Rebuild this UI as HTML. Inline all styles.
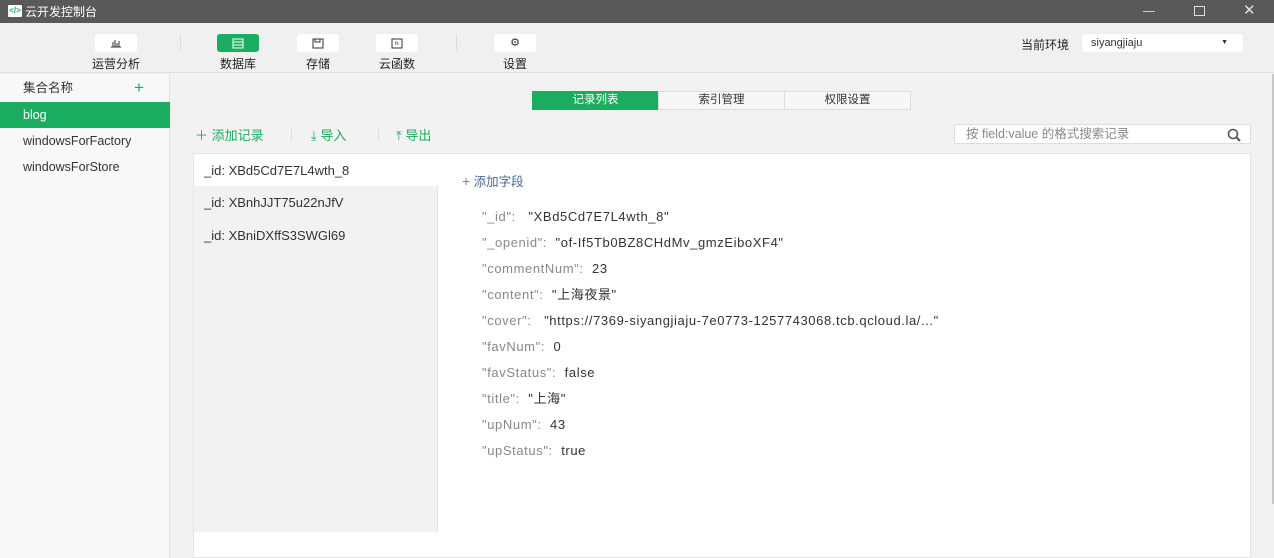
<!DOCTYPE html>
<html><head><meta charset="utf-8"><style>
*{margin:0;padding:0;box-sizing:border-box}
body{width:1274px;height:558px;overflow:hidden;background:#f2f2f2;font-family:"Liberation Sans","Noto Sans CJK SC",sans-serif;font-size:12px;color:#333;position:relative;line-height:16px}
.a{position:absolute}
.tb{left:0;top:0;width:1274px;height:23px;background:#595959;color:#fff}
.tool{left:0;top:23px;width:1274px;height:50px;background:#f0f0f0;border-bottom:1px solid #ddd}
.btn{width:42px;height:18px;background:#fff;border-radius:3px;top:11px;display:flex;align-items:center;justify-content:center}
.lbl{top:33px;font-size:12px;color:#222;width:60px;text-align:center}
.side{left:0;top:74px;width:170px;height:484px;background:#f8f8f8;border-right:1px solid #e3e3e3}
.si{position:absolute;left:0;width:170px;height:26px;line-height:26px;padding-left:23px;font-size:12.5px}
.tab{top:91px;height:19px;width:127px;border:1px solid #ddd;background:#f7f7f7;text-align:center;line-height:17px;font-size:11.5px}
.g{color:#1aad5f}
.row{left:482px;font-size:13px;letter-spacing:.6px;height:16px;line-height:16px;white-space:nowrap}
.k{color:#888}
</style></head><body>
<div class="a tb">
 <div class="a" style="left:8px;top:5px;width:14px;height:12px;background:#fff;border-radius:1px;color:#1aad5f;font-size:8px;line-height:12px;text-align:center;font-weight:bold">&lt;/&gt;</div>
 <div class="a" style="left:25px;top:4px;font-size:12px">云开发控制台</div>
 <div class="a" style="left:1143px;top:11px;width:12px;height:1px;background:#ccc"></div>
 <div class="a" style="left:1194px;top:6px;width:11px;height:10px;border:1px solid #ddd"></div>
 <div class="a" style="left:1243px;top:3px;color:#ddd;font-size:15px">✕</div>
</div>
<div class="a tool">
 <div class="a btn" style="left:95px"><svg width="12" height="10"><path d="M1 9h10M3 4v5M5 2v7M7 5v4M9 3v6" stroke="#333" stroke-width="1" fill="none"/></svg></div>
 <div class="a lbl" style="left:86px">运营分析</div>
 <div class="a" style="left:180px;top:11px;width:1px;height:17px;background:#ddd"></div>
 <div class="a btn" style="left:217px;background:#1aad5f"><svg width="12" height="11"><rect x="1" y="1" width="10" height="9" stroke="#fff" fill="none"/><path d="M1 4h10M1 7h10" stroke="#fff"/></svg></div>
 <div class="a lbl" style="left:208px">数据库</div>
 <div class="a btn" style="left:297px"><svg width="12" height="11"><rect x="1" y="1" width="10" height="9" stroke="#333" fill="none"/><rect x="3" y="1" width="5" height="3" stroke="#333" fill="none"/></svg></div>
 <div class="a lbl" style="left:288px">存储</div>
 <div class="a btn" style="left:376px"><svg width="12" height="11"><rect x="1" y="1" width="10" height="9" stroke="#333" fill="none"/><text x="4" y="7" font-size="5" fill="#333">fx</text></svg></div>
 <div class="a lbl" style="left:367px">云函数</div>
 <div class="a" style="left:456px;top:11px;width:1px;height:17px;background:#ddd"></div>
 <div class="a btn" style="left:494px"><span style="font-size:11px">⚙</span></div>
 <div class="a lbl" style="left:485px">设置</div>
 <div class="a" style="left:1021px;top:14px;font-size:12px;color:#222">当前环境</div>
 <div class="a" style="left:1082px;top:11px;width:161px;height:18px;background:#fff;border-radius:3px;font-size:11px;line-height:18px;padding-left:9px">siyangjiaju<span style="position:absolute;right:15px;font-size:7px">▼</span></div>
</div>
<div class="a side">
 <div class="si" style="top:1px">集合名称<span class="g" style="position:absolute;left:134px;font-size:17px">+</span></div>
 <div class="si" style="top:28px;background:#1aad5f;color:#fff">blog</div>
 <div class="si" style="top:54px">windowsForFactory</div>
 <div class="si" style="top:80px">windowsForStore</div>
</div>
<div class="a tab" style="left:532px;background:#1aad5f;color:#fff;border-color:#1aad5f">记录列表</div>
<div class="a tab" style="left:658px">索引管理</div>
<div class="a tab" style="left:784px">权限设置</div>
<div class="a g" style="left:195px;top:128px;font-size:13px">＋ 添加记录</div>
<div class="a" style="left:291px;top:129px;width:1px;height:12px;background:#ddd"></div>
<div class="a g" style="left:311px;top:128px;font-size:13px">⤓ 导入</div>
<div class="a" style="left:378px;top:129px;width:1px;height:12px;background:#ddd"></div>
<div class="a g" style="left:396px;top:128px;font-size:13px">⤒ 导出</div>
<div class="a" style="left:954px;top:124px;width:297px;height:20px;background:#fff;border:1px solid #ddd;border-radius:2px;color:#888;font-size:12.5px;line-height:18px;padding-left:11px">按 field:value 的格式搜索记录
 <svg class="a" style="right:9px;top:3px" width="14" height="14"><circle cx="6" cy="6" r="4.5" stroke="#555" stroke-width="1.6" fill="none"/><path d="M9.5 9.5L13 13" stroke="#555" stroke-width="2"/></svg></div>
<div class="a" style="left:193px;top:153px;width:1058px;height:405px;background:#fff;border:1px solid #e5e5e5"></div>
<div class="a" style="left:194px;top:154px;width:244px;height:378px;background:#f2f2f2;border-right:1px solid #e3e3e3"></div>
<div class="a" style="left:194px;top:154px;width:244px;height:32px;background:#fff;padding:9px 0 0 10px;font-size:13px">_id: XBd5Cd7E7L4wth_8</div>
<div class="a" style="left:204px;top:195px;font-size:13px">_id: XBnhJJT75u22nJfV</div>
<div class="a" style="left:204px;top:228px;font-size:13px">_id: XBniDXffS3SWGl69</div>
<div class="a" style="left:462px;top:173px;color:#4a6690;font-size:12.5px"><span style="color:#888;font-size:14px">+</span> 添加字段</div>
<div class="a row" style="top:209px"><span class="k">"_id":</span>&nbsp;&nbsp; "XBd5Cd7E7L4wth_8"</div>
<div class="a row" style="top:235px"><span class="k">"_openid":</span>&nbsp; "of-If5Tb0BZ8CHdMv_gmzEiboXF4"</div>
<div class="a row" style="top:261px"><span class="k">"commentNum":</span>&nbsp; 23</div>
<div class="a row" style="top:287px"><span class="k">"content":</span>&nbsp; "上海夜景"</div>
<div class="a row" style="top:313px"><span class="k">"cover":</span>&nbsp;&nbsp; "https://7369-siyangjiaju-7e0773-1257743068.tcb.qcloud.la/..."</div>
<div class="a row" style="top:339px"><span class="k">"favNum":</span>&nbsp; 0</div>
<div class="a row" style="top:365px"><span class="k">"favStatus":</span>&nbsp; false</div>
<div class="a row" style="top:391px"><span class="k">"title":</span>&nbsp; "上海"</div>
<div class="a row" style="top:417px"><span class="k">"upNum":</span>&nbsp; 43</div>
<div class="a row" style="top:443px"><span class="k">"upStatus":</span>&nbsp; true</div>
<div class="a" style="left:1272px;top:74px;width:2px;height:430px;background:#c8c8c8"></div>
</body></html>
